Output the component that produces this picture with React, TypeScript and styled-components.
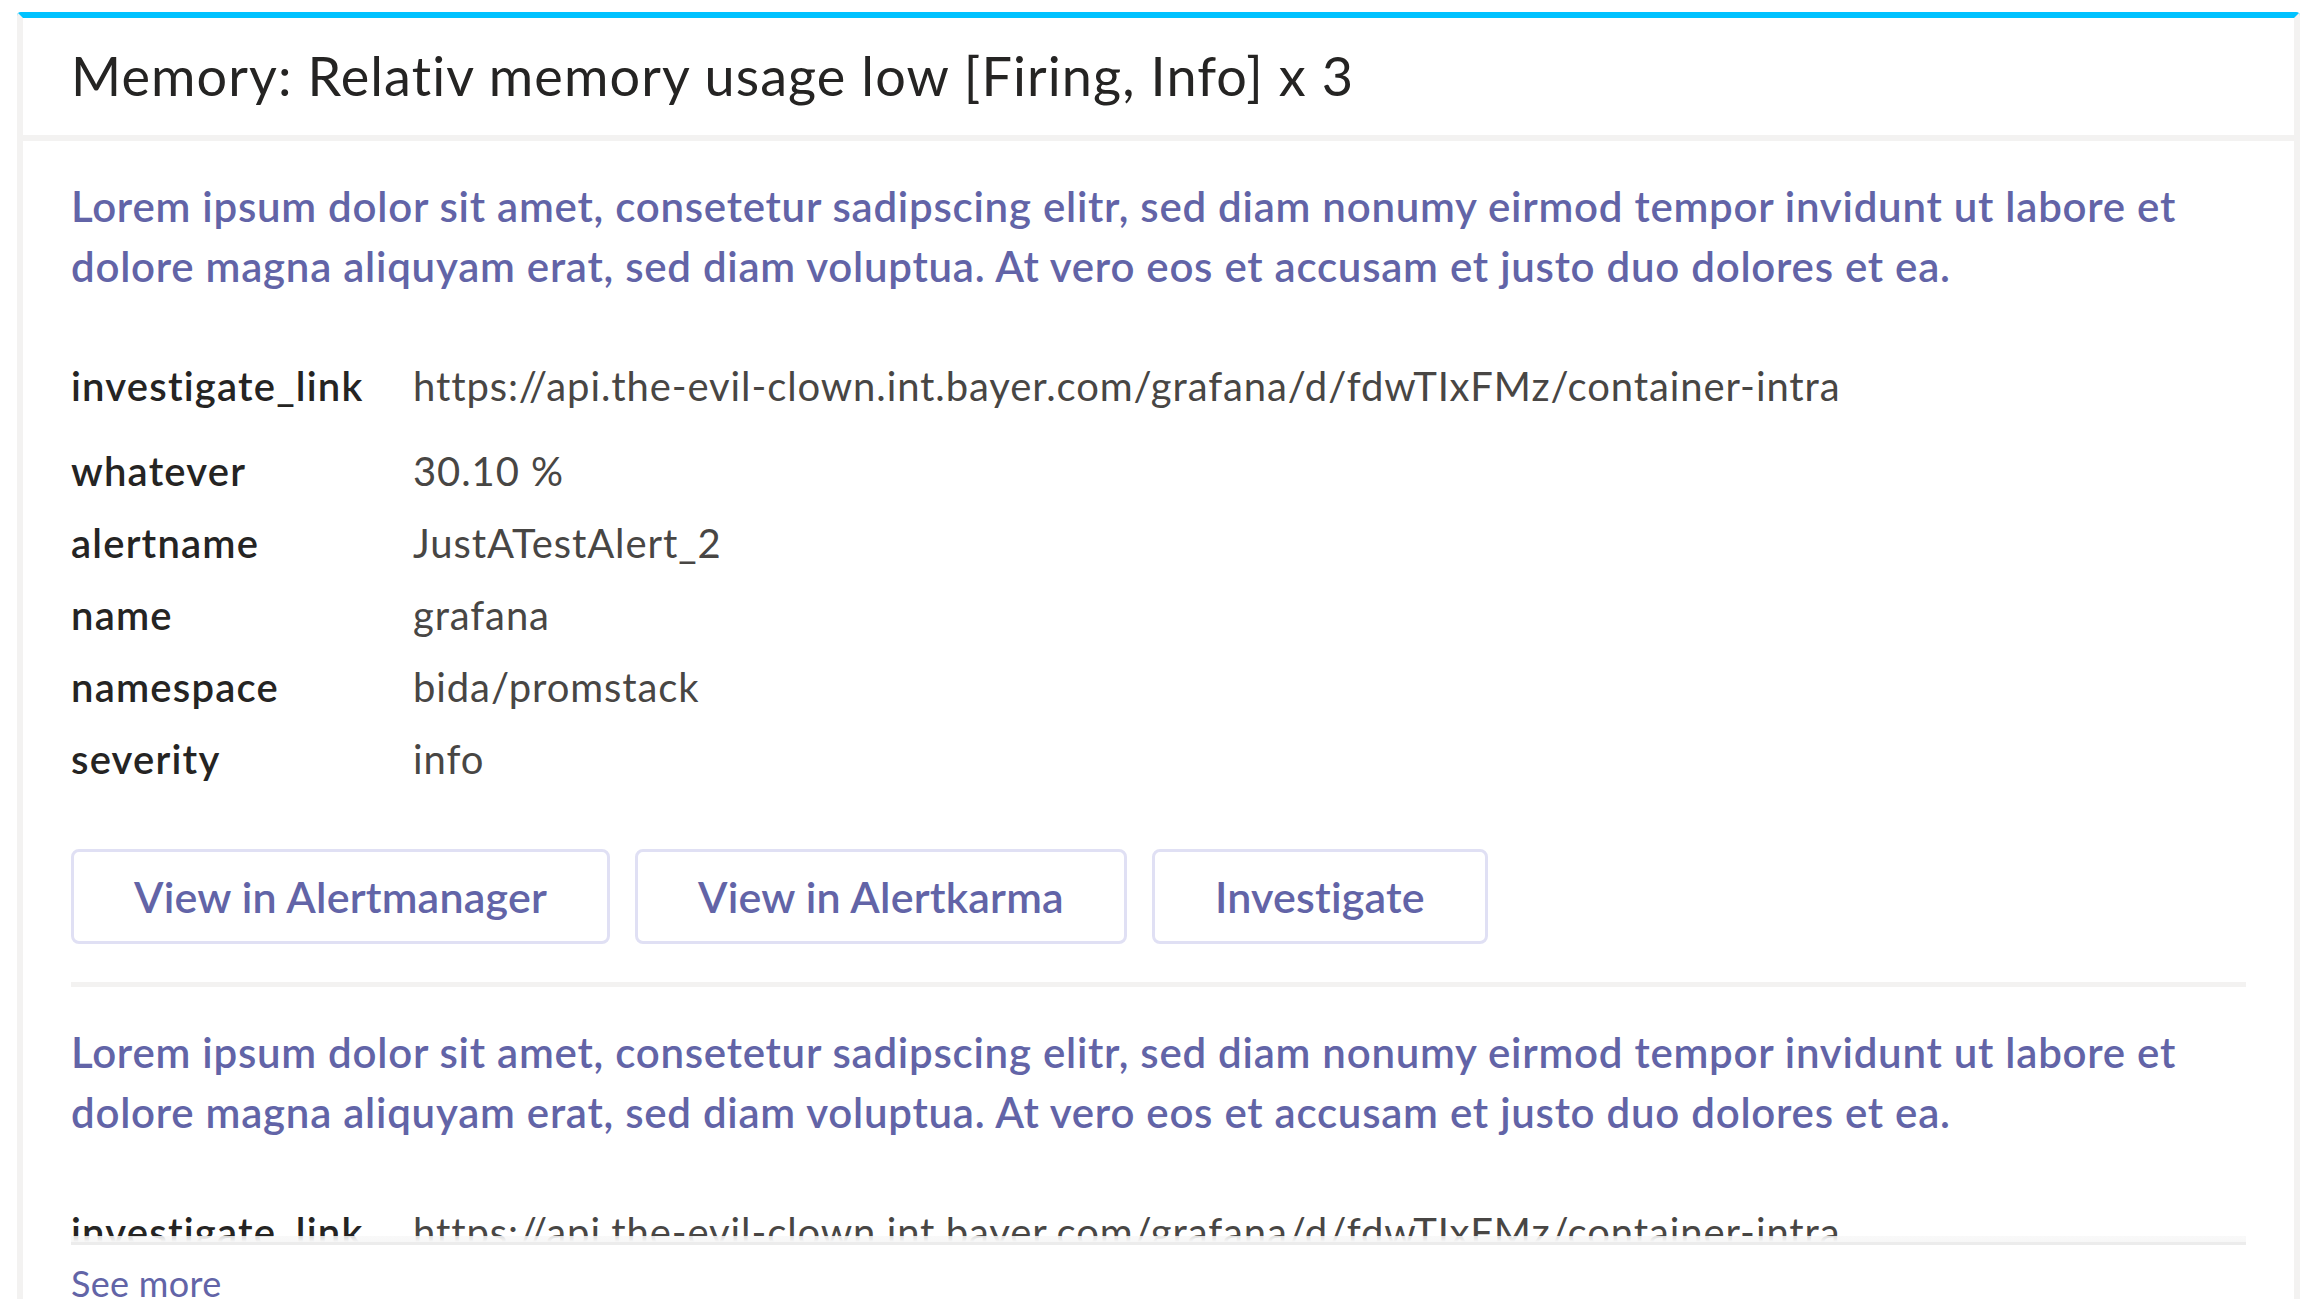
import * as React from 'react';
import styled, { createGlobalStyle } from 'styled-components';

const GlobalStyle = createGlobalStyle`
	html, body {
		margin: 0;
		padding: 0;
		background: #ffffff;
		overflow: hidden;
	}

	body {
		font-family: "Segoe UI", Lato, "Noto Sans", sans-serif;
		color: #252423;
	}
`;

interface Fact {
	name: string;
	value: string;
}

interface Alert {
	description: string;
	facts: Fact[];
}

const description =
	'Lorem ipsum dolor sit amet, consetetur sadipscing elitr, sed diam nonumy eirmod tempor invidunt ut labore et dolore magna aliquyam erat, sed diam voluptua. At vero eos et accusam et justo duo dolores et ea.';

const facts: Fact[] = [
	{ name: 'investigate_link', value: 'https://api.the-evil-clown.int.bayer.com/grafana/d/fdwTIxFMz/container-intra' },
	{ name: 'whatever', value: '30.10 %' },
	{ name: 'alertname', value: 'JustATestAlert_2' },
	{ name: 'name', value: 'grafana' },
	{ name: 'namespace', value: 'bida/promstack' },
	{ name: 'severity', value: 'info' },
];

const alerts: Alert[] = [
	{ description, facts },
	{ description, facts },
];

const actions = ['View in Alertmanager', 'View in Alertkarma', 'Investigate'];

function AlertSection(props: { alert: Alert }) {
	return (
		<Section>
			<Description>{props.alert.description}</Description>
			<Facts>
				{props.alert.facts.map((fact, i) => (
					<FactRow key={fact.name} $lead={i === 0}>
						<FactName>{fact.name}</FactName>
						<FactValue>{fact.value}</FactValue>
					</FactRow>
				))}
			</Facts>
			<Actions>
				{actions.map((label) => (
					<ActionButton key={label}>{label}</ActionButton>
				))}
			</Actions>
			<Divider />
		</Section>
	);
}

export default function App() {
	return (
		<Page>
			<GlobalStyle />
			<Card>
				<Header>
					<Title>Memory: Relativ memory usage low [Firing, Info] x 3</Title>
				</Header>
				<Body>
					<Clip>
						{alerts.map((alert, i) => (
							<AlertSection key={i} alert={alert} />
						))}
						<Fade />
					</Clip>
					<FoldLine />
					<SeeMore>See more</SeeMore>
				</Body>
			</Card>
		</Page>
	);
}

const Page = styled.div`
	padding: 12px 11px 0 17px;
	height: 1299px;
	box-sizing: border-box;
	overflow: hidden;
`;

const Card = styled.div`
	height: 100%;
	box-sizing: border-box;
	background: #ffffff;
	border: 6px solid #f3f2f1;
	border-top: 6px solid #00c2ff;
	border-bottom: none;
	border-radius: 4px 4px 0 0;
	display: flex;
	flex-direction: column;
	overflow: hidden;
`;

const Header = styled.div`
	flex-shrink: 0;
	height: 117px;
	box-sizing: content-box;
	padding: 0 48px;
	border-bottom: 6px solid #f3f2f1;
	display: flex;
	align-items: flex-start;
`;

const Title = styled.h1`
	margin: 26px 0 0;
	font-size: 54px;
	line-height: 1.2;
	font-weight: 400;
	letter-spacing: 1.1px;
	color: #252423;
	white-space: nowrap;
`;

const Body = styled.div`
	flex-shrink: 0;
	padding: 0 48px;
	display: flex;
	flex-direction: column;
`;

const Clip = styled.div`
	flex-shrink: 0;
	position: relative;
	height: 1101px;
	overflow: hidden;
`;

const Fade = styled.div`
	position: absolute;
	left: 0;
	right: 0;
	bottom: 0;
	height: 6px;
	background: linear-gradient(to bottom, rgba(248, 248, 248, 0.85), #f7f7f7);
`;

const FoldLine = styled.div`
	flex-shrink: 0;
	height: 3px;
	background: #ececec;
`;

const SeeMore = styled.a`
	margin-top: 17px;
	font-size: 36px;
	line-height: 1.2;
	letter-spacing: 0.3px;
	color: #6264a7;
	cursor: pointer;
`;

const Section = styled.div`
	padding-top: 35px;
`;

const Description = styled.p`
	margin: 0;
	font-size: 42px;
	line-height: 60px;
	font-weight: 600;
	letter-spacing: 0.75px;
	color: #6264a7;
`;

const Facts = styled.div`
	margin-top: 54px;
	display: flex;
	flex-direction: column;
`;

const FactRow = styled.div<{ $lead?: boolean }>`
	display: grid;
	grid-template-columns: 342px 1fr;
	height: 72px;
	margin-bottom: ${(p) => (p.$lead ? '13px' : '0')};
	font-size: 40px;
	line-height: 72px;
`;

const FactName = styled.div`
	font-weight: 600;
	letter-spacing: 1.2px;
	color: #252423;
`;

const FactValue = styled.div`
	font-weight: 400;
	letter-spacing: 0.9px;
	color: #484644;
	white-space: nowrap;
`;

const Actions = styled.div`
	margin-top: 54px;
	display: flex;
	gap: 25px;
`;

const ActionButton = styled.button`
	height: 95px;
	box-sizing: border-box;
	padding: 0 60px;
	background: #ffffff;
	border: 3px solid #e0e0f4;
	border-radius: 8px;
	font-family: inherit;
	font-size: 43px;
	font-weight: 600;
	letter-spacing: 0.2px;
	color: #6264a7;
	cursor: pointer;
`;

const Divider = styled.div`
	margin-top: 38px;
	height: 5px;
	background: #f3f2f1;
`;
